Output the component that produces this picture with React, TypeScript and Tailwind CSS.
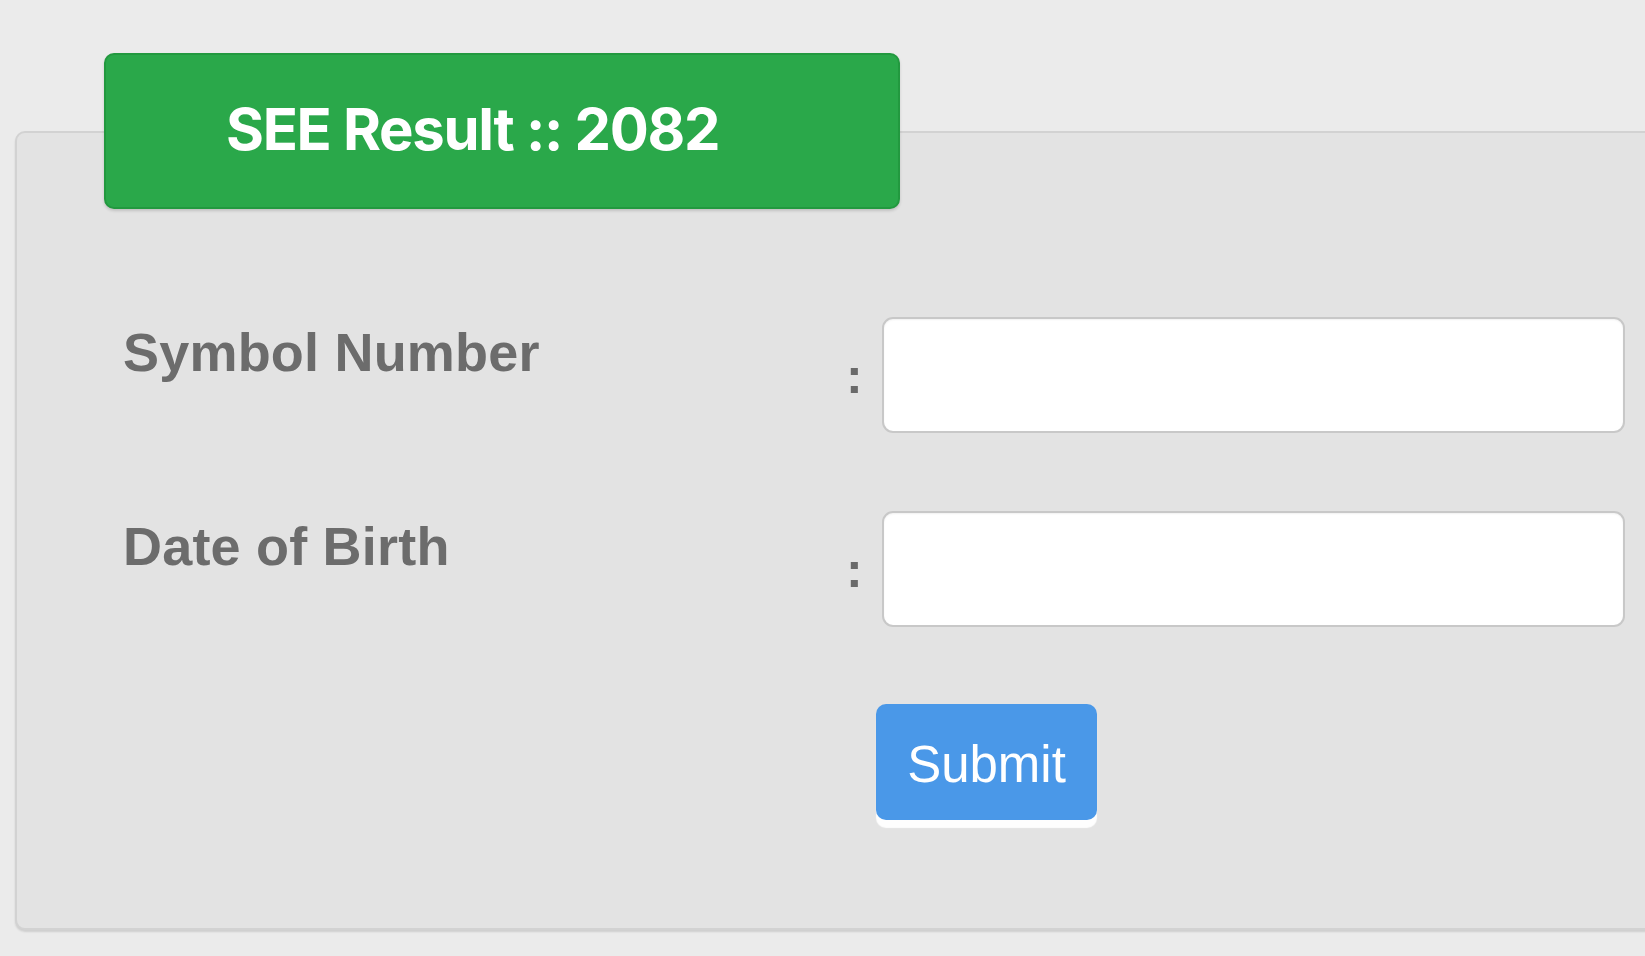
import React from "react";

export default function App() {
  return (
    <div className="w-[1645px] h-[956px] bg-[#ebebeb] overflow-hidden pt-[53px]">
      <div
        className="relative z-10 ml-[104px] w-[796px] h-[156px] bg-[#2aa84a] border-2 border-[#22993f] rounded-[10px] flex items-center pl-[120px] pb-[4px] shadow-[0_2px_3px_rgba(0,0,0,0.15)]"
      >
        <span
          className="text-white font-bold text-[58px] leading-none tracking-[-1.3px]"
          style={{ fontFamily: "Inter, 'Noto Sans', sans-serif" }}
        >
          SEE Result :: 2082
        </span>
      </div>
      <div className="ml-[15px] -mt-[78px] w-[1700px] h-[799px] border-2 border-[#d2d2d2] rounded-[10px] bg-[#e3e3e3] shadow-[0_2px_2px_rgba(0,0,0,0.12)] pt-[184px] pl-[106px]">
        <div
          className="grid grid-cols-[723px_36px_743px] gap-y-[78px]"
          style={{ fontFamily: "'Liberation Sans', Arial, sans-serif" }}
        >
          <div className="h-[116px] pt-[8px] text-[54px] leading-none font-bold tracking-[0.2px] text-[#6c6c6c]">
            Symbol Number
          </div>
          <div className="h-[116px] pt-[34px] text-[50px] leading-none font-bold text-[#6a6a6a]">:</div>
          <input
            type="text"
            className="h-[116px] w-[743px] bg-white border-2 border-[#c8c8c8] rounded-[11px] outline-none shadow-[inset_0_1px_2px_rgba(0,0,0,0.06)]"
          />
          <div className="h-[116px] pt-[8px] text-[54px] leading-none font-bold tracking-[0.2px] text-[#6c6c6c]">
            Date of Birth
          </div>
          <div className="h-[116px] pt-[34px] text-[50px] leading-none font-bold text-[#6a6a6a]">:</div>
          <input
            type="text"
            className="h-[116px] w-[743px] bg-white border-2 border-[#c8c8c8] rounded-[11px] outline-none shadow-[inset_0_1px_2px_rgba(0,0,0,0.06)]"
          />
        </div>
        <div className="mt-[77px] ml-[753px]">
          <button
            className="w-[221px] h-[116px] pt-[4px] bg-[#4a98e8] rounded-[10px] text-white text-[51px] leading-none shadow-[0_8px_1px_rgba(255,255,255,0.95)]"
            style={{ fontFamily: "'Liberation Sans', Arial, sans-serif" }}
          >
            Submit
          </button>
        </div>
      </div>
    </div>
  );
}
